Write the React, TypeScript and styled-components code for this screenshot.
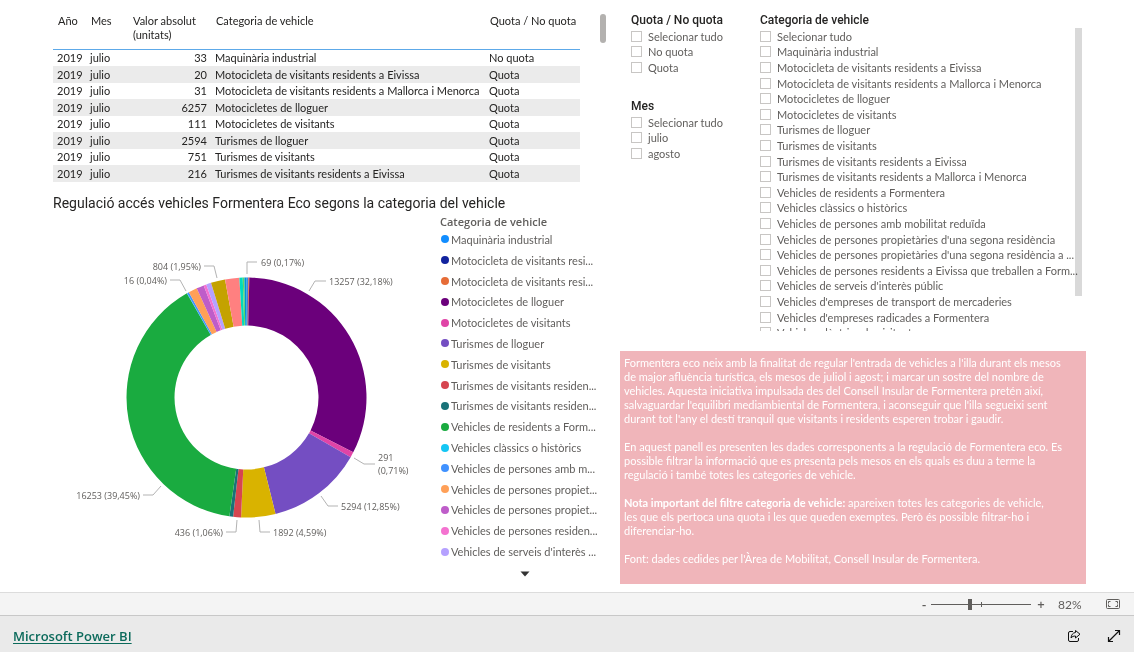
import React from "react";
import styled, { createGlobalStyle } from "styled-components";

const GlobalStyle = createGlobalStyle`
  * { box-sizing: border-box; }
  body {
    margin: 0;
    background: #fff;
    color: #252423;
    font-family: "Lato", "Noto Sans", sans-serif;
    font-size: 11px;
  }
`;

const titleFont = `"Roboto", "Liberation Sans", sans-serif`;
const strongFont = `"Open Sans", "Noto Sans", sans-serif`;

const Page = styled.div`
  display: flex;
  flex-direction: column;
  min-height: 100vh;
`;

const Report = styled.main`
  flex: 1;
  display: grid;
  grid-template-columns: minmax(0, 567fr) minmax(0, 466fr);
  padding: 13px 48px 7px 53px;
`;

const Column = styled.div`
  display: flex;
  flex-direction: column;
  min-width: 0;
`;

const TableVisual = styled.section`
  display: flex;
  gap: 20px;
  height: 169px;
  padding-top: 1px;
`;

const DataTable = styled.table`
  width: 527px;
  table-layout: fixed;
  border-collapse: separate;
  border-spacing: 0;
  font-size: 11px;
`;

const Col = styled.col<{ $w: number }>`
  width: ${(p) => p.$w}px;
`;

const HeadCell = styled.th`
  height: 36px;
  padding: 0 4px 0 5px;
  border-bottom: 1px solid #5da9e9;
  font-weight: 400;
  line-height: 14px;
  text-align: left;
  vertical-align: top;
  white-space: nowrap;
`;

const Row = styled.tr`
  height: 16px;
  &:nth-child(even) {
    height: 17px;
    background: #ebebeb;
  }
`;

const Cell = styled.td<{ $num?: boolean }>`
  padding: 0 4px;
  line-height: 16px;
  text-align: ${(p) => (p.$num ? "right" : "left")};
  white-space: nowrap;
`;

const Thumb = styled.div`
  width: 6px;
  height: 29px;
  border-radius: 3px;
  background: #b3b1af;
`;

const ChartTitle = styled.h2`
  margin: 12px 0 0;
  font: 400 14px/18px ${titleFont};
`;

const ChartVisual = styled.section`
  display: flex;
`;

const Donut = styled.svg`
  flex: none;
  width: 387px;
  height: 370px;
  margin-top: 3px;
  text {
    font-family: ${strongFont};
    font-size: 9px;
    fill: #605e5c;
  }
  polyline {
    fill: none;
    stroke: #b3b3b3;
  }
`;

const Legend = styled.div`
  width: 166px;
  padding-top: 3px;
  color: #605e5c;
`;

const LegendTitle = styled.div`
  font: 600 11px/14px ${strongFont};
`;

const LegendList = styled.ul`
  display: grid;
  grid-auto-rows: 1fr;
  height: 333px;
  margin: 0;
  padding: 0;
  list-style: none;
`;

const LegendItem = styled.li`
  display: flex;
  align-items: center;
  gap: 2px;
  white-space: nowrap;
`;

const Dot = styled.span<{ $c: string }>`
  width: 8px;
  height: 8px;
  margin-left: 1px;
  border-radius: 50%;
  background: ${(p) => p.$c};
`;

const LegendMore = styled.button`
  display: block;
  width: 100%;
  height: 14px;
  margin-top: 3px;
  padding: 0 0 0 3px;
  border: 0;
  background: none;
  text-align: center;
`;

const Slicers = styled.div`
  display: grid;
  grid-template-columns: 129px minmax(0, 1fr);
  height: 338px;
  padding: 0 4px 0 11px;
`;

const SlicerStack = styled.div`
  display: flex;
  flex-direction: column;
  gap: 24px;
`;

const Slicer = styled.fieldset`
  position: relative;
  min-width: 0;
  margin: 0;
  padding: 0;
  border: 0;
`;

const SlicerTitle = styled.legend`
  padding: 0;
  font: 500 12px/15px ${titleFont};
`;

const SlicerList = styled.div`
  max-height: 303px;
  overflow: hidden;
`;

const Option = styled.label`
  display: flex;
  align-items: center;
  gap: 6px;
  height: 16px;
  color: #605e5c;
  font-size: 11px;
  white-space: nowrap;
  &:nth-child(5n + 2),
  &:nth-child(5n) {
    height: 15px;
  }
`;

const Check = styled.input`
  appearance: none;
  flex: none;
  width: 11px;
  height: 11px;
  margin: 0;
  border: 1px solid #c8c6c4;
  background: #fff;
`;

const ListBar = styled.div`
  position: absolute;
  top: 0;
  right: 0;
  width: 7px;
  height: 268px;
  background: #d9d9d9;
  mix-blend-mode: multiply;
`;

const Note = styled.section`
  height: 233px;
  padding: 5px 4px;
  background: #f0b5ba;
  color: #fff;
  line-height: 14px;
  white-space: nowrap;
  p {
    margin: 0 0 14px;
  }
`;

const ZoomBar = styled.div`
  display: flex;
  align-items: center;
  justify-content: flex-end;
  height: 23px;
  padding-right: 14px;
  border-top: 1px solid #dcdcdc;
  background: #f4f4f4;
  color: #605e5c;
`;

const ZoomButton = styled.button`
  width: 10px;
  padding: 0;
  border: 0;
  background: none;
  color: #605e5c;
  font: 600 13px/20px ${strongFont};
`;

const ZoomRange = styled.input`
  appearance: none;
  width: 100px;
  height: 12px;
  margin: 0 5px 0 2px;
  background:
    linear-gradient(#605e5c, #605e5c) 50px 50% / 1px 5px no-repeat,
    linear-gradient(#605e5c, #605e5c) 0 50% / 100% 1px no-repeat;
  &::-webkit-slider-thumb {
    appearance: none;
    width: 4px;
    height: 11px;
    background: #605e5c;
  }
`;

const ZoomValue = styled.span`
  width: 24px;
  margin: 0 24px 0 12px;
  font-size: 12px;
`;

const IconButton = styled.button`
  display: flex;
  padding: 0;
  border: 0;
  background: none;
`;

const Footer = styled.footer`
  display: flex;
  align-items: center;
  justify-content: space-between;
  height: 37px;
  padding: 4px 13px 0;
  border-top: 1px solid #c8c8c8;
  background: #eaeaea;
`;

const BrandLink = styled.a`
  color: #0b6a5b;
  font-family: ${strongFont};
  font-size: 13px;
  font-weight: 600;
  text-decoration: underline;
  text-underline-offset: 2px;
`;

const FooterIcons = styled.div`
  display: flex;
  gap: 26px;
`;

const rows: [string, string, string][] = [
  ["33", "Maquinària industrial", "No quota"],
  ["20", "Motocicleta de visitants residents a Eivissa", "Quota"],
  ["31", "Motocicleta de visitants residents a Mallorca i Menorca", "Quota"],
  ["6257", "Motocicletes de lloguer", "Quota"],
  ["111", "Motocicletes de visitants", "Quota"],
  ["2594", "Turismes de lloguer", "Quota"],
  ["751", "Turismes de visitants", "Quota"],
  ["216", "Turismes de visitants residents a Eivissa", "Quota"],
];

const legend: [string, string][] = [
  ["#118dff", "Maquinària industrial"],
  ["#12239e", "Motocicleta de visitants resi..."],
  ["#e66c37", "Motocicleta de visitants resi..."],
  ["#6b007b", "Motocicletes de lloguer"],
  ["#e044a7", "Motocicletes de visitants"],
  ["#744ec2", "Turismes de lloguer"],
  ["#d9b300", "Turismes de visitants"],
  ["#d64550", "Turismes de visitants residen..."],
  ["#197278", "Turismes de visitants residen..."],
  ["#1aab40", "Vehicles de residents a Form..."],
  ["#15c6f4", "Vehicles clàssics o històrics"],
  ["#4092ff", "Vehicles de persones amb m..."],
  ["#ffa058", "Vehicles de persones propiet..."],
  ["#be5dc9", "Vehicles de persones propiet..."],
  ["#f472d0", "Vehicles de persones residen..."],
  ["#b5a1ff", "Vehicles de serveis d'interès ..."],
];

const categories = [
  "Selecionar tudo",
  "Maquinària industrial",
  "Motocicleta de visitants residents a Eivissa",
  "Motocicleta de visitants residents a Mallorca i Menorca",
  "Motocicletes de lloguer",
  "Motocicletes de visitants",
  "Turismes de lloguer",
  "Turismes de visitants",
  "Turismes de visitants residents a Eivissa",
  "Turismes de visitants residents a Mallorca i Menorca",
  "Vehicles de residents a Formentera",
  "Vehicles clàssics o històrics",
  "Vehicles de persones amb mobilitat reduïda",
  "Vehicles de persones propietàries d'una segona residència",
  "Vehicles de persones propietàries d'una segona residència a ...",
  "Vehicles de persones residents a Eivissa que treballen a Form...",
  "Vehicles de serveis d'interès públic",
  "Vehicles d'empreses de transport de mercaderies",
  "Vehicles d'empreses radicades a Formentera",
  "Vehicles elèctrics de visitants",
];

// Each slice: colour and the angle, in degrees from the top, where it ends.
const slices: [string, number][] = [
  ["#118dff", 0.6],
  ["#12239e", 0.9],
  ["#e66c37", 1.35],
  ["#6b007b", 117.2],
  ["#e044a7", 119.8],
  ["#744ec2", 166],
  ["#d9b300", 182.6],
  ["#d64550", 186.4],
  ["#197278", 188.2],
  ["#1aab40", 330.2],
  ["#15c6f4", 330.4],
  ["#4092ff", 331.3],
  ["#ffa058", 335.5],
  ["#be5dc9", 339.1],
  ["#f472d0", 340.4],
  ["#b5a1ff", 342.8],
  ["#c4a200", 349.7],
  ["#ff8080", 356.6],
  ["#00dbbc", 358.2],
  ["#5bd667", 359],
  ["#0091d5", 360],
];

const CX = 193.5;
const CY = 182.5;
const point = (r: number, deg: number) => {
  const a = (deg * Math.PI) / 180;
  return `${(CX + r * Math.sin(a)).toFixed(2)} ${(CY - r * Math.cos(a)).toFixed(2)}`;
};
const arc = (from: number, to: number) =>
  `M${point(120, from)}A120 120 0 ${to - from > 180 ? 1 : 0} 1 ${point(120, to)}` +
  `L${point(72, to)}A72 72 0 ${to - from > 180 ? 1 : 0} 0 ${point(72, from)}Z`;

const labels: { x: number; y: number; text: string; end?: boolean; line: string }[] = [
  { x: 208, y: 51, text: "69 (0,17%)", line: "194,59 194,47 204,47" },
  { x: 276, y: 70, text: "13257 (32,18%)", line: "256,76 262,66 273,66" },
  { x: 325, y: 246, text: "291", line: "301,243 311,249 322,249" },
  { x: 325, y: 259, text: "(0,71%)", line: "" },
  { x: 288, y: 295, text: "5294 (12,85%)", line: "268,281 275,291 285,291" },
  { x: 220, y: 321, text: "1892 (4,59%)", line: "206,305 207,317 217,317" },
  { x: 170, y: 321, text: "436 (1,06%)", end: true, line: "184,305 183,317 173,317" },
  { x: 87, y: 284, text: "16253 (39,45%)", end: true, line: "108,271 100,280 90,280" },
  { x: 114, y: 69, text: "16 (0,04%)", end: true, line: "133,76 127,65 117,65" },
  { x: 148, y: 55, text: "804 (1,95%)", end: true, line: "164,63 161,51 151,51" },
];

function Options({ items }: { items: string[] }) {
  return (
    <SlicerList>
      {items.map((t) => (
        <Option key={t}>
          <Check type="checkbox" />
          {t}
        </Option>
      ))}
    </SlicerList>
  );
}

export default function App() {
  return (
    <Page>
      <GlobalStyle />
      <Report>
        <Column>
          <TableVisual>
            <DataTable>
              <colgroup>
                <Col $w={33} />
                <Col $w={42} />
                <Col $w={83} />
                <Col $w={274} />
                <Col $w={95} />
              </colgroup>
              <thead>
                <tr>
                  <HeadCell>Año</HeadCell>
                  <HeadCell>Mes</HeadCell>
                  <HeadCell>
                    Valor absolut
                    <br />
                    (unitats)
                  </HeadCell>
                  <HeadCell>Categoria de vehicle</HeadCell>
                  <HeadCell>Quota / No quota</HeadCell>
                </tr>
              </thead>
              <tbody>
                {rows.map(([n, cat, quota]) => (
                  <Row key={cat}>
                    <Cell>2019</Cell>
                    <Cell>julio</Cell>
                    <Cell $num>{n}</Cell>
                    <Cell>{cat}</Cell>
                    <Cell>{quota}</Cell>
                  </Row>
                ))}
              </tbody>
            </DataTable>
            <Thumb />
          </TableVisual>
          <ChartTitle>Regulació accés vehicles Formentera Eco segons la categoria del vehicle</ChartTitle>
          <ChartVisual>
            <Donut viewBox="0 0 387 370" role="img" aria-label="Vehicles per categoria">
              {slices.map(([c, to], i) => (
                <path key={c} fill={c} d={arc(i ? slices[i - 1][1] : 0, to)} />
              ))}
              {labels.map((l) => (
                <g key={l.text}>
                  {l.line && <polyline points={l.line} />}
                  <text x={l.x} y={l.y} textAnchor={l.end ? "end" : "start"}>
                    {l.text}
                  </text>
                </g>
              ))}
            </Donut>
            <Legend>
              <LegendTitle>Categoria de vehicle</LegendTitle>
              <LegendList>
                {legend.map(([c, t]) => (
                  <LegendItem key={c}>
                    <Dot $c={c} />
                    {t}
                  </LegendItem>
                ))}
              </LegendList>
              <LegendMore aria-label="Més">
                <svg width="10" height="6" viewBox="0 0 10 6">
                  <path d="M0.500 0.500h9L5 5.500z" fill="#333" />
                </svg>
              </LegendMore>
            </Legend>
          </ChartVisual>
        </Column>
        <Column>
          <Slicers>
            <SlicerStack>
              <Slicer>
                <SlicerTitle>Quota / No quota</SlicerTitle>
                <Options items={["Selecionar tudo", "No quota", "Quota"]} />
              </Slicer>
              <Slicer>
                <SlicerTitle>Mes</SlicerTitle>
                <Options items={["Selecionar tudo", "julio", "agosto"]} />
              </Slicer>
            </SlicerStack>
            <Slicer>
              <SlicerTitle>Categoria de vehicle</SlicerTitle>
              <Options items={categories} />
              <ListBar />
            </Slicer>
          </Slicers>
          <Note>
            <p>
              Formentera eco neix amb la finalitat de regular l'entrada de vehicles a l'illa durant els mesos
              <br />
              de major afluència turística, els mesos de juliol i agost; i marcar un sostre del nombre de
              <br />
              vehicles. Aquesta iniciativa impulsada des del Consell Insular de Formentera pretén així,
              <br />
              salvaguardar l'equilibri mediambiental de Formentera, i aconseguir que l'illa segueixi sent
              <br />
              durant tot l'any el destí tranquil que visitants i residents esperen trobar i gaudir.
            </p>
            <p>
              En aquest panell es presenten les dades corresponents a la regulació de Formentera eco. Es
              <br />
              possible filtrar la informació que es presenta pels mesos en els quals es duu a terme la
              <br />
              regulació i també totes les categories de vehicle.
            </p>
            <p>
              <b>Nota important del filtre categoria de vehicle:</b> apareixen totes les categories de vehicle,
              <br />
              les que els pertoca una quota i les que queden exemptes. Però és possible filtrar-ho i
              <br />
              diferenciar-ho.
            </p>
            <p>Font: dades cedides per l'Àrea de Mobilitat, Consell Insular de Formentera.</p>
          </Note>
        </Column>
      </Report>
      <ZoomBar>
        <ZoomButton aria-label="Reduir">-</ZoomButton>
        <ZoomRange type="range" min={0} max={100} defaultValue={39} aria-label="Zoom" />
        <ZoomButton aria-label="Ampliar">+</ZoomButton>
        <ZoomValue>82%</ZoomValue>
        <IconButton aria-label="Ajustar a la pàgina">
          <svg width="14" height="11" viewBox="0 0 14 11" fill="none" stroke="#605e5c">
            <rect x="0.500" y="0.500" width="13" height="9" rx="1" />
            <path d="M2.500 4.500v-2h2M9.500 2.500h2v2M2.500 5.500v2h2M11.500 5.500v2h-2" />
          </svg>
        </IconButton>
      </ZoomBar>
      <Footer>
        <BrandLink href="#">Microsoft Power BI</BrandLink>
        <FooterIcons>
          <IconButton aria-label="Compartir">
            <svg width="14" height="14" viewBox="0 0 14 14" fill="none" stroke="#111" strokeLinejoin="round">
              <path d="M6 2.500H3A1.500 1.500 0 0 0 1.500 4v7A1.500 1.500 0 0 0 3 12.500h7a1.500 1.500 0 0 0 1.500-1.500V9" />
              <path d="M8.500 1.500L13 5.200 8.500 9V7C6.500 7 5.200 7.500 4 9 4.300 6 5.800 3.700 8.500 3.500z" />
            </svg>
          </IconButton>
          <IconButton aria-label="Pantalla completa">
            <svg width="14" height="14" viewBox="0 0 14 14" fill="none" stroke="#111" strokeWidth="1.200">
              <path d="M1.500 12.500l11-11M8 1.500h4.500V6M1.500 8v4.500H6" />
            </svg>
          </IconButton>
        </FooterIcons>
      </Footer>
    </Page>
  );
}
